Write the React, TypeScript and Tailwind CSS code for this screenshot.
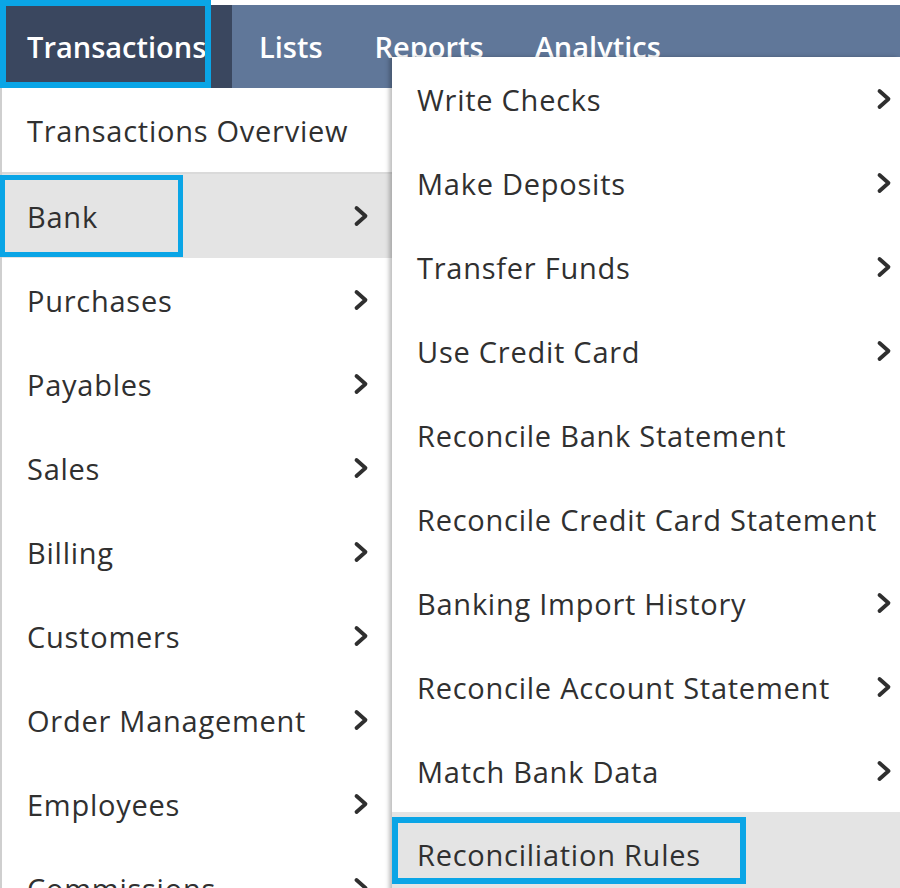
import type { ReactNode } from "react";

const leftItems = [
  "Purchases",
  "Payables",
  "Sales",
  "Billing",
  "Customers",
  "Order Management",
  "Employees",
  "Commissions",
];

const bankItems: { label: string; more: boolean }[] = [
  { label: "Write Checks", more: true },
  { label: "Make Deposits", more: true },
  { label: "Transfer Funds", more: true },
  { label: "Use Credit Card", more: true },
  { label: "Reconcile Bank Statement", more: false },
  { label: "Reconcile Credit Card Statement", more: false },
  { label: "Banking Import History", more: true },
  { label: "Reconcile Account Statement", more: true },
  { label: "Match Bank Data", more: true },
];

function Chevron() {
  return (
    <svg width="16" height="22" viewBox="0 0 16 22" className="shrink-0">
      <polyline
        points="3.5,3 12.5,11 3.5,19"
        fill="none"
        stroke="#2f2f2f"
        strokeWidth="3.8"
        strokeLinecap="round"
        strokeLinejoin="round"
      />
    </svg>
  );
}

function Row({
  children,
  more,
  className = "",
}: {
  children: ReactNode;
  more?: boolean;
  className?: string;
}) {
  return (
    <div className={`flex h-[84px] items-center justify-between ${className}`}>
      <span className="pt-[2px]">{children}</span>
      {more ? <Chevron /> : null}
    </div>
  );
}

export default function App() {
  return (
    <div className="relative h-[888px] w-[900px] overflow-hidden bg-white font-['Open_Sans',sans-serif] text-[29px] tracking-[0.75px] text-[#303030]">
      <div className="pt-[5px]">
        <nav className="flex h-[83px] items-center bg-[#607799] text-[29px] font-semibold tracking-normal text-white">
          <div className="relative flex h-full w-[232px] items-center bg-[#3a475f] pl-[27px]">
            Transactions
            <span className="absolute -top-[5px] left-0 h-[88px] w-[211px] border-[6px] border-[#0aa5e6]" />
          </div>
          <span className="ml-[27px]">Lists</span>
          <span className="ml-[52px]">Reports</span>
          <span className="ml-[51px]">Analytics</span>
        </nav>
      </div>

      <div className="w-[392px] border-l-2 border-[#cfcfcf]">
        <Row className="h-[86px] border-b-2 border-[#dadada] pl-[25px]">Transactions Overview</Row>
        <Row more className="relative bg-[#e4e4e4] pl-[25px] pr-[23px]">
          Bank
          <span className="absolute -left-[2px] top-[1px] h-[82px] w-[183px] border-[5px] border-[#0aa5e6]" />
        </Row>
        {leftItems.map((item) => (
          <Row key={item} more className="pl-[25px] pr-[23px]">
            {item}
          </Row>
        ))}
      </div>

      <div className="absolute left-[392px] right-0 top-[57px] bg-white shadow-[-3px_0_4px_rgba(0,0,0,0.25)]">
        {bankItems.map((item) => (
          <Row key={item.label} more={item.more} className="pl-[25px] pr-[8px]">
            {item.label}
          </Row>
        ))}
        <Row className="relative mt-[-1px] bg-[#e4e4e4] pl-[25px]">
          Reconciliation Rules
          <span className="absolute left-0 top-[5px] h-[67px] w-[354px] border-[6px] border-[#0aa5e6]" />
        </Row>
      </div>
    </div>
  );
}
